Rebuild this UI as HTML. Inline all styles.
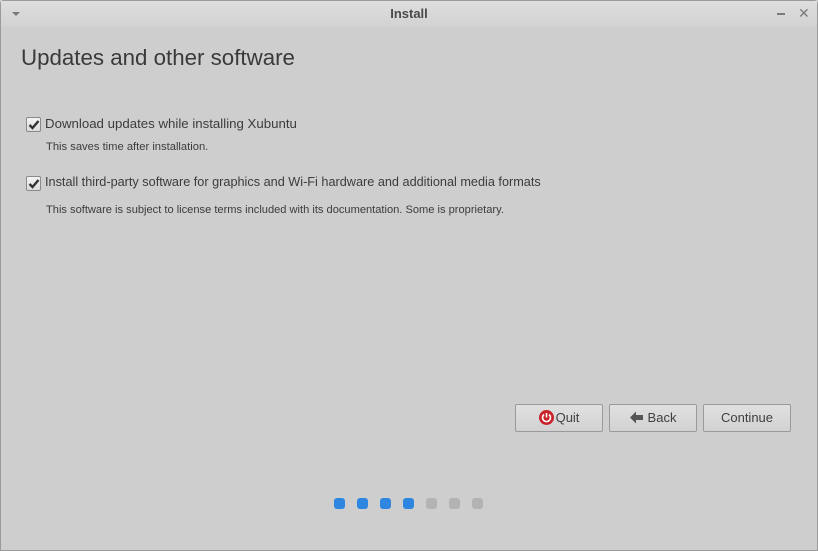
<!DOCTYPE html>
<html><head><style>
body{margin:0;width:818px;height:551px;overflow:hidden;background:#cecece;font-family:"Liberation Sans","DejaVu Sans",sans-serif;color:#3c3c3c;position:relative}
.win{position:absolute;left:0;top:0;width:816px;height:549px;border:1px solid #9a9a9a;border-radius:4px 4px 0 0;background:#cecece}
.tb{position:absolute;left:0;top:0;right:0;height:26px;background:linear-gradient(#dedede,#d2d2d2);text-align:center;font-size:13px;font-weight:bold;line-height:26px;color:#4a4a4a}
.t{position:absolute;white-space:nowrap}
.cb{position:absolute;width:13px;height:13px;border:1px solid #8a8a8a;border-radius:2px;background:linear-gradient(#f4f4f4,#dcdcdc)}
.btn{position:absolute;top:404px;height:26px;border:1px solid #9a9a9a;border-radius:2px;background:linear-gradient(#e0e0e0,#d2d2d2);font-size:13px;line-height:26px;text-align:center;color:#404040}
.dot{position:absolute;top:498px;width:11px;height:11px;border-radius:3px}
</style></head><body>
<div class="win">
<div class="tb">Install</div>
<div style="position:absolute;left:11px;top:11px;width:0;height:0;border-left:4px solid transparent;border-right:4px solid transparent;border-top:4px solid #777"></div>
<div style="position:absolute;left:776px;top:12px;width:8px;height:2px;background:#7a7a7a"></div>
<div class="t" style="left:797px;top:4px;font-size:14px;color:#7a7a7a;font-weight:bold">✕</div>
</div>
<div class="t" style="left:21px;top:45px;font-size:22.3px;color:#3a3a3a">Updates and other software</div>
<div class="cb" style="left:26px;top:117px"></div>
<svg style="position:absolute;left:27px;top:118px" width="14" height="14"><path d="M2.5 7 L5.5 10 L11.5 3" stroke="#333" stroke-width="2.4" fill="none"/></svg>
<div class="t" style="left:45px;top:116px;font-size:13.25px">Download updates while installing Xubuntu</div>
<div class="t" style="left:46px;top:141px;font-size:11.2px">This saves time after installation.</div>
<div class="cb" style="left:26px;top:176px"></div>
<svg style="position:absolute;left:27px;top:177px" width="14" height="14"><path d="M2.5 7 L5.5 10 L11.5 3" stroke="#333" stroke-width="2.4" fill="none"/></svg>
<div class="t" style="left:45px;top:175px;font-size:12.7px">Install third-party software for graphics and Wi-Fi hardware and additional media formats</div>
<div class="t" style="left:46px;top:204px;font-size:11.1px">This software is subject to license terms included with its documentation. Some is proprietary.</div>
<div class="btn" style="left:515px;width:86px"><span style="display:inline-block;width:15px;height:15px;border-radius:50%;background:#c8232b;vertical-align:-3px;position:relative;margin-right:2px"><svg width="15" height="15" style="position:absolute;left:0;top:0"><path d="M5 4.5 A4 4 0 1 0 10 4.5" stroke="#fff" stroke-width="1.6" fill="none"/><path d="M7.5 3 V7.5" stroke="#fff" stroke-width="1.6"/></svg></span>Quit</div>
<div class="btn" style="left:609px;width:86px"><svg width="14" height="13" style="vertical-align:-2px;margin-right:4px"><path d="M0 6.5 L6 0.5 L6 4 L13 4 L13 9 L6 9 L6 12.5 Z" fill="#555"/></svg>Back</div>
<div class="btn" style="left:703px;width:86px">Continue</div>
<div class="dot" style="left:334px;background:#2f86e0"></div>
<div class="dot" style="left:357px;background:#2f86e0"></div>
<div class="dot" style="left:380px;background:#2f86e0"></div>
<div class="dot" style="left:403px;background:#2f86e0"></div>
<div class="dot" style="left:426px;background:#b3b3b3"></div>
<div class="dot" style="left:449px;background:#b3b3b3"></div>
<div class="dot" style="left:472px;background:#b3b3b3"></div>
</body></html>
